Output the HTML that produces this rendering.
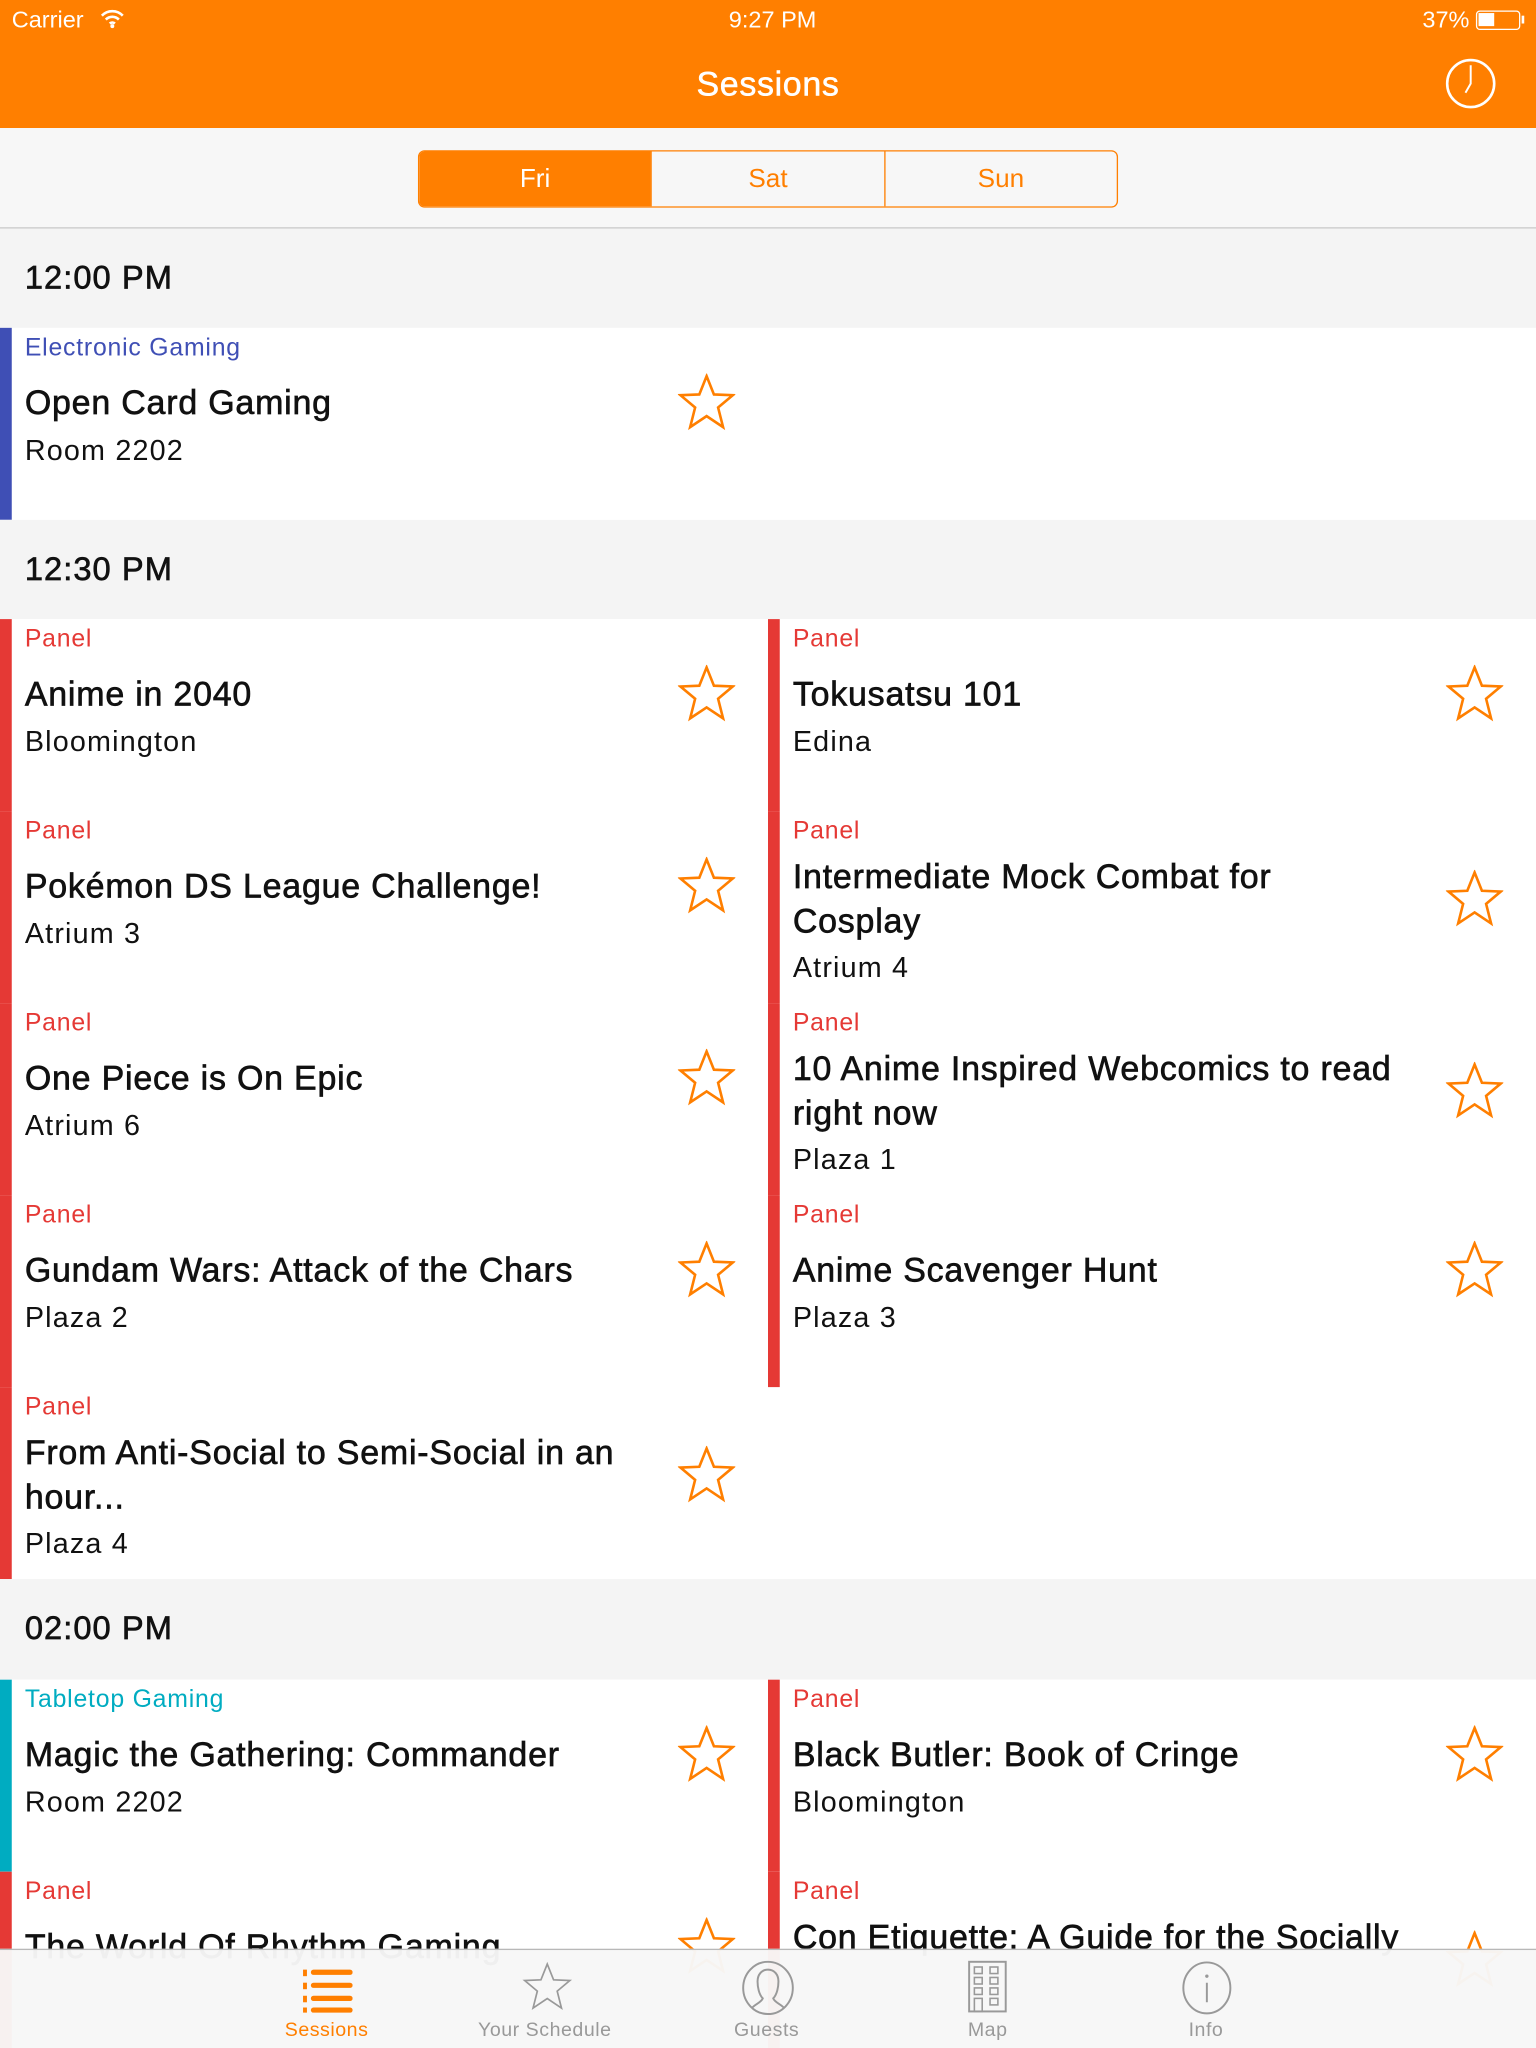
<!DOCTYPE html>
<html><head><meta charset="utf-8"><style>
*{margin:0;padding:0;box-sizing:border-box}
body{width:1536px;height:2048px;overflow:hidden;background:#fff;font-family:"Liberation Sans",sans-serif}
#w{position:absolute;left:0;top:0;width:1176px;height:1568px;transform:scale(1.306122);transform-origin:0 0;overflow:hidden;background:#fff}
.a{position:absolute}
.hdr{position:absolute;left:0;width:1176px;height:76px;background:#f4f4f4;font-size:25px;color:#111;padding:24px 0 0 19px;letter-spacing:0.8px;-webkit-text-stroke:0.5px #111}
.cell{position:absolute;width:588px;height:147px;background:#fff}
.bar{position:absolute;left:0;top:0;bottom:0;width:9px}
.cat{position:absolute;left:19px;top:4px;font-size:19px;line-height:24px;letter-spacing:0.6px}
.tt{position:absolute;left:19px;top:40px;font-size:26px;line-height:34px;color:#111;width:470px;letter-spacing:0.6px;-webkit-text-stroke:0.5px #111}
.rm{position:absolute;left:19px;top:80px;font-size:22px;line-height:28px;color:#111;letter-spacing:0.9px}
.two .tt{top:33px}.two .rm{top:106px}
.star{position:absolute;left:519px;top:35px;width:44px;height:44px}
.two .star{top:45px}
</style></head><body><div id="w">
<div class="a" style="left:0;top:0;width:1176px;height:98px;background:#ff7f00;color:#fff">
 <div class="a" style="left:9px;top:5px;font-size:18px">Carrier</div>
 <svg class="a" style="left:77px;top:6px" width="18" height="16" viewBox="0 0 18 16"><path d="M1 6a11 11 0 0 1 16 0M4 9a7 7 0 0 1 10 0M7 12a3 3 0 0 1 4 0" stroke="#fff" stroke-width="2" fill="none"/><circle cx="9" cy="14" r="1.5" fill="#fff"/></svg>
 <div class="a" style="left:0;width:1183px;text-align:center;top:5px;font-size:18px">9:27 PM</div>
 <div class="a" style="left:1089px;top:5px;font-size:18px">37%</div>
 <div class="a" style="left:1130px;top:8px;width:34px;height:15px;border:1.5px solid #fff;border-radius:3px"><div style="width:12px;height:10px;background:#fff;margin:1px"></div></div>
 <div class="a" style="left:1165px;top:12px;width:2px;height:6px;background:#fff"></div>
 <div class="a" style="left:0;width:1176px;text-align:center;top:49px;font-size:26px;letter-spacing:0.5px;-webkit-text-stroke:0.4px #fff">Sessions</div>
 <svg class="a" style="left:1106px;top:44px" width="40" height="40" viewBox="0 0 40 40"><circle cx="20" cy="20" r="18" stroke="#fff" stroke-width="2" fill="none"/><path d="M20 6V20L16 27" stroke="#fff" stroke-width="1.5" fill="none"/></svg>
</div>
<div class="a" style="left:0;top:98px;width:1176px;height:77px;background:#f7f7f7;border-bottom:1px solid #c8c8c8"></div>
<div class="a" style="left:320px;top:115px;width:536px;height:44px;border:1.5px solid #ff7f00;border-radius:5px;overflow:hidden;display:flex;font-size:20px;color:#ff7f00">
 <div style="flex:1;background:#ff7f00;color:#fff;text-align:center;line-height:42px">Fri</div>
 <div style="flex:1;text-align:center;line-height:42px;border-right:1.5px solid #ff7f00;border-left:1.5px solid #ff7f00">Sat</div>
 <div style="flex:1;text-align:center;line-height:42px">Sun</div>
</div>
<svg width="0" height="0" style="position:absolute"><defs><symbol id="st" viewBox="0 0 44 44"><path d="M22 2L27.6 16 42 16.6 30.8 26 34.6 41 22 32.6 9.4 41 13.2 26 2 16.6 16.4 16Z" fill="none" stroke="#ff7f00" stroke-width="2" stroke-linejoin="miter"/></symbol></defs></svg>

<div class="hdr" style="top:175px">12:00 PM</div>
<div class="cell" style="left:0;top:251px"><div class="bar" style="background:#3f4fb5"></div><div class="cat" style="color:#3f4fb5">Electronic Gaming</div><div class="tt">Open Card Gaming</div><div class="rm">Room 2202</div><svg class="star"><use href="#st"/></svg></div>

<div class="hdr" style="top:398px">12:30 PM</div>
<div class="cell" style="left:0;top:474px"><div class="bar" style="background:#e53935"></div><div class="cat" style="color:#e53935">Panel</div><div class="tt">Anime in 2040</div><div class="rm">Bloomington</div><svg class="star"><use href="#st"/></svg></div>
<div class="cell" style="left:588px;top:474px"><div class="bar" style="background:#e53935"></div><div class="cat" style="color:#e53935">Panel</div><div class="tt">Tokusatsu 101</div><div class="rm">Edina</div><svg class="star"><use href="#st"/></svg></div>
<div class="cell" style="left:0;top:621px"><div class="bar" style="background:#e53935"></div><div class="cat" style="color:#e53935">Panel</div><div class="tt">Pokémon DS League Challenge!</div><div class="rm">Atrium 3</div><svg class="star"><use href="#st"/></svg></div>
<div class="cell two" style="left:588px;top:621px"><div class="bar" style="background:#e53935"></div><div class="cat" style="color:#e53935">Panel</div><div class="tt">Intermediate Mock Combat for<br>Cosplay</div><div class="rm">Atrium 4</div><svg class="star"><use href="#st"/></svg></div>
<div class="cell" style="left:0;top:768px"><div class="bar" style="background:#e53935"></div><div class="cat" style="color:#e53935">Panel</div><div class="tt">One Piece is On Epic</div><div class="rm">Atrium 6</div><svg class="star"><use href="#st"/></svg></div>
<div class="cell two" style="left:588px;top:768px"><div class="bar" style="background:#e53935"></div><div class="cat" style="color:#e53935">Panel</div><div class="tt">10 Anime Inspired Webcomics to read<br>right now</div><div class="rm">Plaza 1</div><svg class="star"><use href="#st"/></svg></div>
<div class="cell" style="left:0;top:915px"><div class="bar" style="background:#e53935"></div><div class="cat" style="color:#e53935">Panel</div><div class="tt">Gundam Wars: Attack of the Chars</div><div class="rm">Plaza 2</div><svg class="star"><use href="#st"/></svg></div>
<div class="cell" style="left:588px;top:915px"><div class="bar" style="background:#e53935"></div><div class="cat" style="color:#e53935">Panel</div><div class="tt">Anime Scavenger Hunt</div><div class="rm">Plaza 3</div><svg class="star"><use href="#st"/></svg></div>
<div class="cell two" style="left:0;top:1062px"><div class="bar" style="background:#e53935"></div><div class="cat" style="color:#e53935">Panel</div><div class="tt">From Anti-Social to Semi-Social in an<br>hour...</div><div class="rm">Plaza 4</div><svg class="star"><use href="#st"/></svg></div>

<div class="hdr" style="top:1209px;height:77px">02:00 PM</div>
<div class="cell" style="left:0;top:1286px"><div class="bar" style="background:#00acc1"></div><div class="cat" style="color:#00acc1">Tabletop Gaming</div><div class="tt">Magic the Gathering: Commander</div><div class="rm">Room 2202</div><svg class="star"><use href="#st"/></svg></div>
<div class="cell" style="left:588px;top:1286px"><div class="bar" style="background:#e53935"></div><div class="cat" style="color:#e53935">Panel</div><div class="tt">Black Butler: Book of Cringe</div><div class="rm">Bloomington</div><svg class="star"><use href="#st"/></svg></div>
<div class="cell" style="left:0;top:1433px"><div class="bar" style="background:#e53935"></div><div class="cat" style="color:#e53935">Panel</div><div class="tt">The World Of Rhythm Gaming</div><svg class="star"><use href="#st"/></svg></div>
<div class="cell two" style="left:588px;top:1433px"><div class="bar" style="background:#e53935"></div><div class="cat" style="color:#e53935">Panel</div><div class="tt">Con Etiquette: A Guide for the Socially</div><svg class="star"><use href="#st"/></svg></div>

<div class="a" style="left:0;top:1492px;width:1176px;height:76px;background:rgba(247,247,247,0.97);border-top:1px solid #b8b8b8;font-size:15px;color:#999;letter-spacing:0.4px">
 <svg class="a" style="left:232px;top:12px" width="38" height="36" viewBox="0 0 38 36"><g fill="#ff7f00"><rect x="0" y="3" width="3" height="5"/><rect x="6" y="3" width="32" height="4" rx="2"/><rect x="0" y="13" width="3" height="5"/><rect x="6" y="13" width="32" height="4" rx="2"/><rect x="0" y="23" width="3" height="5"/><rect x="6" y="23" width="32" height="4" rx="2"/><rect x="0" y="32" width="3" height="4"/><rect x="6" y="32" width="32" height="4" rx="2"/></g></svg>
 <div class="a" style="left:218px;top:53px;color:#ff7f00">Sessions</div>
 <svg class="a" style="left:400px;top:9px" width="38" height="38" viewBox="0 0 44 44"><path d="M22 2L27.6 16 42 16.6 30.8 26 34.6 41 22 32.6 9.4 41 13.2 26 2 16.6 16.4 16Z" fill="none" stroke="#999" stroke-width="1.5"/></svg>
 <div class="a" style="left:366px;top:53px">Your Schedule</div>
 <svg class="a" style="left:567px;top:8px" width="42" height="44" viewBox="0 0 42 44"><ellipse cx="21" cy="21" rx="19" ry="20" fill="none" stroke="#999" stroke-width="1.5"/><path d="M9 36c3-3 7-4 8-7-3-3-4-9-4-13 0-5 3-9 8-9s8 4 8 9c0 4-1 10-4 13 1 3 5 4 8 7" fill="none" stroke="#999" stroke-width="1.5"/></svg>
 <div class="a" style="left:562px;top:53px">Guests</div>
 <svg class="a" style="left:741px;top:8px" width="30" height="40" viewBox="0 0 30 40"><rect x="1" y="1" width="28" height="38" fill="none" stroke="#999" stroke-width="1.5"/><g fill="none" stroke="#999" stroke-width="1.2"><rect x="5" y="5" width="6" height="5"/><rect x="17" y="5" width="6" height="5"/><rect x="5" y="13" width="6" height="5"/><rect x="17" y="13" width="6" height="5"/><rect x="5" y="21" width="6" height="5"/><rect x="17" y="21" width="6" height="5"/><rect x="5" y="29" width="6" height="10"/><rect x="17" y="29" width="6" height="5"/></g></svg>
 <div class="a" style="left:741px;top:53px">Map</div>
 <svg class="a" style="left:904px;top:8px" width="40" height="42" viewBox="0 0 40 42"><ellipse cx="20" cy="21" rx="18" ry="19.5" fill="none" stroke="#999" stroke-width="1.5"/><circle cx="20" cy="12" r="1.3" fill="#999"/><path d="M20 17V32" stroke="#999" stroke-width="1.5"/></svg>
 <div class="a" style="left:910px;top:53px">Info</div>
</div>
</div></body></html>
